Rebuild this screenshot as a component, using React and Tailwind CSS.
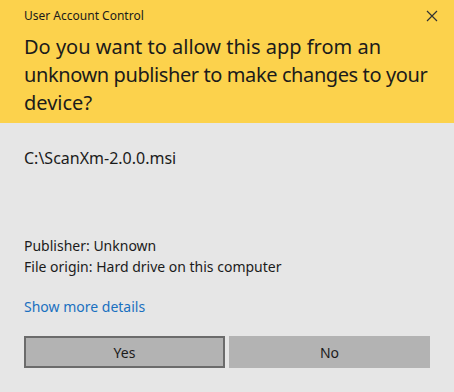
export default function App() {
  const font = { fontFamily: '"Noto Sans", "Open Sans", sans-serif' };
  return (
    <div className="w-[454px] h-[392px] bg-[#e6e6e6] flex flex-col text-[#1b1b1b]" style={font}>
      <div className="bg-[#fcd24c] h-[123px] flex flex-col px-6">
        <div className="flex items-center justify-between h-[32px]">
          <span className="text-[12px]">User Account Control</span>
          <svg width="12" height="12" viewBox="0 0 12 12" className="mr-[-8px]">
            <path d="M1 1L11 11M11 1L1 11" stroke="#333" strokeWidth="1.2" />
          </svg>
        </div>
        <div className="text-[20px] leading-[28px] mt-[1px] whitespace-nowrap">
          <div>Do you want to allow this app from an</div>
          <div className="tracking-[-0.4px]">unknown publisher to make changes to your</div>
          <div>device?</div>
        </div>
      </div>
      <div className="flex flex-col px-6 flex-1">
        <div className="text-[16px] leading-[20px] mt-[25px]">C:\ScanXm-2.0.0.msi</div>
        <div className="text-[14px] leading-[21px] mt-[67px]">
          <div>Publisher: Unknown</div>
          <div>File origin: Hard drive on this computer</div>
        </div>
        <div className="text-[14px] leading-[20px] mt-[20px] text-[#1a70c0]">Show more details</div>
        <div className="flex gap-[4px] mt-[19px]">
          <button className="w-[201px] h-[32px] bg-[#b3b3b3] border-2 border-[#6b6b6b] text-[14px]">Yes</button>
          <button className="w-[201px] h-[32px] bg-[#b3b3b3] text-[14px]">No</button>
        </div>
      </div>
    </div>
  );
}
